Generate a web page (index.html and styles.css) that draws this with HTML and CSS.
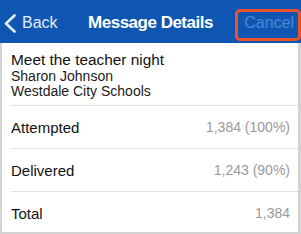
FILE: index.html
```html
<!DOCTYPE html>
<html>
<head>
<meta charset="utf-8">
<link rel="stylesheet" href="styles.css">
</head>
<body>
<div class="screen">
  <header class="nav">
    <div class="nav-left">
      <svg class="chev" width="12" height="19" viewBox="0 0 12 19"><polyline points="10.5,1.5 2,9.5 10.5,17.5" fill="none" stroke="#e3ebf7" stroke-width="2.6" stroke-linecap="round" stroke-linejoin="round"/></svg>
      <span class="back">Back</span>
    </div>
    <div class="title">Message Details</div>
    <div class="nav-right"><span class="cancel">Cancel</span></div>
  </header>
  <section class="info">
    <div class="subject">Meet the teacher night</div>
    <div class="meta">Sharon Johnson</div>
    <div class="meta">Westdale City Schools</div>
  </section>
  <div class="rows">
    <div class="row"><span class="label">Attempted</span><span class="value">1,384 (100%)</span></div>
    <div class="row"><span class="label">Delivered</span><span class="value">1,243 (90%)</span></div>
    <div class="row"><span class="label">Total</span><span class="value">1,384</span></div>
  </div>
</div>
</body>
</html>
```
FILE: styles.css
```css
html, body {
  margin: 0;
  padding: 0;
  background: #ffffff;
}
body {
  width: 301px;
  height: 234px;
  overflow: hidden;
  font-family: "Liberation Sans", Arial, sans-serif;
}
.screen {
  box-sizing: border-box;
  width: 301px;
  height: 234px;
  border-left: 2px solid #d4d4d4;
  border-right: 3px solid #d4d4d4;
  border-bottom: 2px solid #d4d4d4;
}
.nav {
  box-sizing: border-box;
  height: 43px;
  padding-top: 3px;
  margin: 0 -3px 0 -2px;
  background: #0f56b2;
  display: grid;
  grid-template-columns: 1fr auto 1fr;
  align-items: center;
}
.nav-left {
  display: flex;
  align-items: center;
  padding-left: 4px;
  gap: 6px;
}
.chev {
  display: block;
}
.back {
  color: #e3ebf7;
  font-size: 16px;
}
.title {
  color: #ffffff;
  font-weight: bold;
  font-size: 17px;
  letter-spacing: -0.5px;
}
.nav-right {
  display: flex;
  justify-content: flex-end;
  align-items: center;
}
.cancel {
  color: #4a86d4;
  font-size: 16px;
  border: 3px solid #e8532b;
  border-radius: 5px;
  height: 22px;
  line-height: 22px;
  padding: 0 4px 4px 6px;
  margin-top: 3px;
}
.info {
  box-sizing: border-box;
  padding: 8px 0 0 9px;
  height: 62px;
}
.subject {
  font-size: 15.4px;
  color: #111;
  line-height: 18px;
}
.meta {
  font-size: 14px;
  color: #1a1a1a;
  line-height: 15px;
}
.rows {
  margin-left: 9px;
}
.row {
  border-top: 1px solid #e0e0e0;
  height: 42px;
  display: flex;
  align-items: center;
  justify-content: space-between;
  padding-right: 8px;
}
.label {
  font-size: 15px;
  color: #111;
}
.value {
  font-size: 14px;
  color: #9a9a9a;
}
```
